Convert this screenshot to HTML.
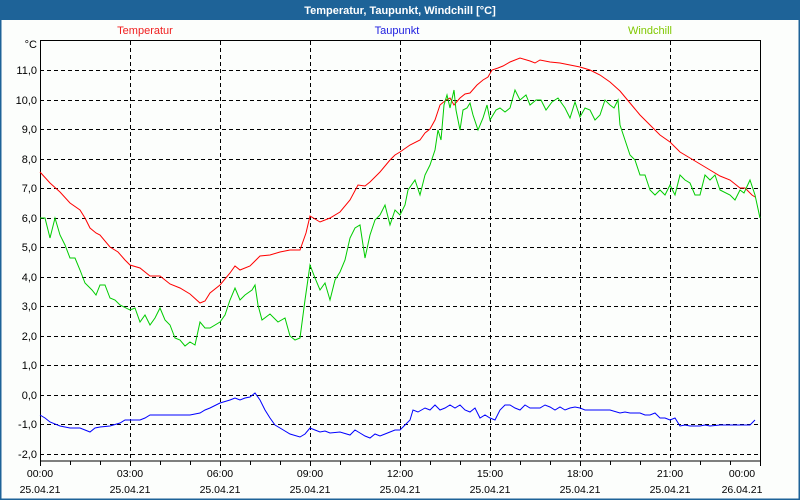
<!DOCTYPE html>
<html><head><meta charset="utf-8"><style>
html,body{margin:0;padding:0;width:800px;height:500px;overflow:hidden;background:#fcfefc;font-family:"Liberation Sans",sans-serif}
svg{display:block}
</style></head><body>
<svg width="800" height="500" xmlns="http://www.w3.org/2000/svg" font-family="Liberation Sans, sans-serif" font-size="11">
<rect x="0" y="0" width="800" height="500" fill="#fcfefc"/>
<rect x="0" y="0" width="800" height="20" fill="#1e6398"/>
<rect x="0" y="0" width="1.5" height="500" fill="#1e6398"/>
<rect x="798.5" y="0" width="1.5" height="500" fill="#1e6398"/>
<rect x="0" y="498.5" width="800" height="1.5" fill="#1e6398"/>
<text x="400" y="14" fill="#fff" font-weight="bold" text-anchor="middle">Temperatur, Taupunkt, Windchill [°C]</text>
<text x="145" y="34" fill="#f02020" text-anchor="middle">Temperatur</text>
<text x="397" y="34" fill="#2020e0" text-anchor="middle">Taupunkt</text>
<text x="650" y="34" fill="#80c800" text-anchor="middle">Windchill</text>
<g stroke="#000" stroke-dasharray="4,3" stroke-width="1">
<line x1="40" x2="760" y1="70.5" y2="70.5"/><line x1="40" x2="760" y1="100.5" y2="100.5"/>
<line x1="40" x2="760" y1="129.5" y2="129.5"/><line x1="40" x2="760" y1="159.5" y2="159.5"/>
<line x1="40" x2="760" y1="188.5" y2="188.5"/><line x1="40" x2="760" y1="218.5" y2="218.5"/>
<line x1="40" x2="760" y1="247.5" y2="247.5"/><line x1="40" x2="760" y1="277.5" y2="277.5"/>
<line x1="40" x2="760" y1="306.5" y2="306.5"/><line x1="40" x2="760" y1="336.5" y2="336.5"/>
<line x1="40" x2="760" y1="365.5" y2="365.5"/><line x1="40" x2="760" y1="395.5" y2="395.5"/>
<line x1="40" x2="760" y1="424.5" y2="424.5"/><line x1="40" x2="760" y1="454.5" y2="454.5"/>
<line x1="130.5" x2="130.5" y1="41" y2="461"/><line x1="220.5" x2="220.5" y1="41" y2="461"/>
<line x1="310.5" x2="310.5" y1="41" y2="461"/><line x1="400.5" x2="400.5" y1="41" y2="461"/>
<line x1="490.5" x2="490.5" y1="41" y2="461"/><line x1="580.5" x2="580.5" y1="41" y2="461"/>
<line x1="670.5" x2="670.5" y1="41" y2="461"/>
</g>
<rect x="40.5" y="40.5" width="720" height="420.5" fill="none" stroke="#000" stroke-width="1"/>
<g stroke="#000"><path d="M40.5 461v5M70.5 461v4M100.5 461v4M130.5 461v5M160.5 461v4M190.5 461v4M220.5 461v5M250.5 461v4M280.5 461v4M310.5 461v5M340.5 461v4M370.5 461v4M400.5 461v5M430.5 461v4M460.5 461v4M490.5 461v5M520.5 461v4M550.5 461v4M580.5 461v5M610.5 461v4M640.5 461v4M670.5 461v5M700.5 461v4M730.5 461v4M760.5 461v5"/></g>
<g text-anchor="end" fill="#000">
<text x="37" y="48">°C</text>
<text x="37" y="74">11,0</text><text x="37" y="104">10,0</text><text x="37" y="133">9,0</text>
<text x="37" y="163">8,0</text><text x="37" y="192">7,0</text><text x="37" y="222">6,0</text>
<text x="37" y="251">5,0</text><text x="37" y="281">4,0</text><text x="37" y="310">3,0</text>
<text x="37" y="340">2,0</text><text x="37" y="369">1,0</text><text x="37" y="399">0,0</text>
<text x="37" y="428">-1,0</text><text x="37" y="458">-2,0</text>
</g>
<g text-anchor="middle" fill="#000" font-size="10.5">
<text x="40" y="477">00:00</text><text x="130" y="477">03:00</text><text x="220" y="477">06:00</text>
<text x="310" y="477">09:00</text><text x="400" y="477">12:00</text><text x="490" y="477">15:00</text>
<text x="580" y="477">18:00</text><text x="670" y="477">21:00</text><text x="742" y="477">00:00</text>
<text x="40" y="493">25.04.21</text><text x="130" y="493">25.04.21</text><text x="220" y="493">25.04.21</text>
<text x="310" y="493">25.04.21</text><text x="400" y="493">25.04.21</text><text x="490" y="493">25.04.21</text>
<text x="580" y="493">25.04.21</text><text x="670" y="493">25.04.21</text><text x="742" y="493">26.04.21</text>
</g>
<polyline fill="none" stroke="#f00" stroke-width="1" points="40,172 50,183 60,192 70,203 80,210 85,218 90,228 96,233 100,235 110,247 118,252 125,260 130,265 140,268 150,276 160,276 170,284 180,288 190,294 200,303 205,301 210,293 220,285 230,273 235,266 240,270 250,266 260,256 270,255 280,252 290,250 300,250 306,233 310,216 320,222 330,218 340,212 350,200 358,185 365,186 370,182 380,172 390,160 395,155 400,152 410,145 420,140 425,133 430,129 435,120 440,105 446,100 450,98 454,105 460,98 465,94 470,93 477,85 483,80 488,77 492,70 498,68 503,66 510,62 520,58 530,61 535,63 540,60 550,62 560,63 570,65 580,67 590,70 600,75 610,82 620,91 630,103 640,115 650,125 660,135 670,142 680,152 690,158 700,164 710,170 720,176 730,180 740,188 745,188 752,195 755,197"/>
<polyline fill="none" stroke="#00cc00" stroke-width="1" points="40,218 45,218 50,238 55,218 60,235 65,245 70,258 75,258 80,270 85,283 92,290 96,295 100,285 105,285 110,298 115,300 120,305 130,310 135,308 140,322 145,315 150,325 155,318 160,308 165,320 170,325 175,338 180,340 185,346 190,342 195,345 200,322 205,328 210,328 220,322 225,315 230,300 235,288 240,300 245,295 252,290 255,285 258,305 262,320 270,314 278,322 285,318 290,336 295,340 300,338 305,300 310,265 315,278 320,290 325,283 330,300 335,280 340,272 345,260 350,238 355,228 360,225 365,258 370,235 375,220 380,215 385,205 390,225 395,210 400,215 405,205 408,190 415,180 420,195 425,175 430,165 435,150 438,130 441,140 444,105 447,95 450,108 454,90 456,110 458,120 460,130 463,110 467,108 470,103 473,115 478,130 483,118 487,105 490,120 496,110 500,108 505,112 510,108 515,90 520,100 526,95 530,105 536,100 541,100 546,110 552,102 558,98 565,108 570,118 575,102 580,117 585,108 590,110 595,120 600,115 605,100 610,105 614,108 618,100 620,125 625,140 630,155 635,160 640,175 645,175 650,190 655,195 660,190 665,195 670,185 675,195 680,175 685,180 690,183 695,195 700,195 705,175 710,180 715,175 720,190 730,195 735,200 740,190 744,193 750,180 755,195 760,218"/>
<polyline fill="none" stroke="#0000ff" stroke-width="1" points="40,415 45,418 50,422 60,426 70,428 80,428 85,430 90,432 95,428 100,427 110,426 120,423 125,420 130,420 140,420 145,418 150,415 160,415 170,415 180,415 190,415 200,413 205,410 210,408 220,403 230,400 235,398 240,400 245,398 250,397 255,393 260,400 265,410 270,418 275,425 280,428 290,434 300,437 305,434 310,428 315,430 320,432 325,431 330,433 340,432 350,435 355,430 360,433 365,436 370,438 375,434 380,436 385,434 390,432 395,430 400,430 405,425 410,420 413,410 418,412 425,408 430,410 435,405 440,410 445,408 450,405 455,408 460,405 465,410 470,412 475,408 480,418 485,415 490,418 495,420 500,410 505,405 510,405 515,408 520,410 525,405 530,408 540,408 545,405 550,407 555,410 560,407 565,410 570,408 575,407 580,408 585,410 590,410 600,410 610,410 620,413 625,412 630,413 640,413 645,415 650,415 655,413 660,418 665,418 670,420 675,418 680,426 685,425 690,426 700,426 705,425 710,426 720,425 730,425 740,425 745,425 750,425 755,420"/>
</svg>
</body></html>
